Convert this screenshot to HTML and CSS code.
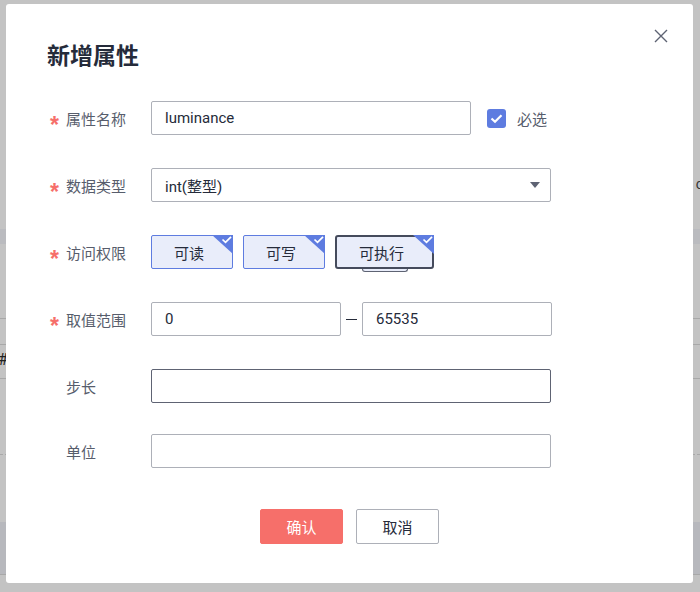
FILE: index.html
```html
<!DOCTYPE html>
<html lang="zh-CN">

<head>
    <meta charset="UTF-8">
    <meta name="viewport" content="width=device-width, initial-scale=1.0">
    <title>新增属性</title>
    <link rel="stylesheet" href="styles.css">
</head>

<body>
    <!-- page behind the mask -->
    <div class="backdrop">
        <div class="bg-row bg-top"><span class="bg-char">c</span></div>
        <div class="bg-row bg-band"></div>
        <div class="bg-row bg-mid"></div>
        <div class="bg-row bg-line"></div>
        <div class="bg-row bg-hash"><span class="bg-mark">#</span></div>
        <div class="bg-row bg-dash"></div>
        <div class="bg-row bg-low"></div>
        <div class="bg-row bg-foot"></div>
    </div>

    <div class="dialog">
        <button class="close" aria-label="关闭">
            <svg width="14" height="14" viewBox="0 0 14 14">
                <path d="M1 1 L13 13 M13 1 L1 13" stroke="#5e6373" stroke-width="1.4" fill="none"/>
            </svg>
        </button>

        <h2 class="title">新增属性</h2>

        <form class="form">
            <div class="row">
                <label class="label"><span class="req">*</span>属性名称</label>
                <div class="control">
                    <input class="input input-name" type="text" value="luminance">
                    <span class="checkbox">
                        <svg width="13" height="11" viewBox="0 0 13 11">
                            <path d="M1.5 5.5 L5 8.8 L11.5 2.2" stroke="#fff" stroke-width="2.2" fill="none"/>
                        </svg>
                    </span>
                    <span class="check-text">必选</span>
                </div>
            </div>

            <div class="row">
                <label class="label"><span class="req">*</span>数据类型</label>
                <div class="control">
                    <div class="select">
                        <span>int(整型)</span>
                        <span class="caret"></span>
                    </div>
                </div>
            </div>

            <div class="row">
                <label class="label"><span class="req">*</span>访问权限</label>
                <div class="control tags">
                    <button type="button" class="tag">可读<span class="corner"></span></button>
                    <button type="button" class="tag">可写<span class="corner"></span></button>
                    <button type="button" class="tag tag-focus">可执行<span class="corner"></span><span class="tag-tab"></span></button>
                </div>
            </div>

            <div class="row">
                <label class="label"><span class="req">*</span>取值范围</label>
                <div class="control">
                    <input class="input input-range" type="text" value="0">
                    <span class="dash"></span>
                    <input class="input input-range" type="text" value="65535">
                </div>
            </div>

            <div class="row row-tight">
                <label class="label">步长</label>
                <div class="control">
                    <input class="input input-wide input-hover" type="text">
                </div>
            </div>

            <div class="row">
                <label class="label">单位</label>
                <div class="control">
                    <input class="input input-wide" type="text">
                </div>
            </div>
        </form>

        <div class="footer">
            <button type="button" class="btn btn-primary">确认</button>
            <button type="button" class="btn">取消</button>
        </div>
    </div>

    <script>
        // tick corner for every selected permission tag
        var tick = '<svg width="21" height="19" viewBox="0 0 21 19">' +
            '<polygon points="0,0 21,0 21,19" fill="#5e7ce0"/>' +
            '<path d="M10.5 4.5 L13.5 7.3 L19 1.8" stroke="#fff" stroke-width="1.7" fill="none"/></svg>';
        document.querySelectorAll(".corner").forEach(function (el) {
            el.innerHTML = tick;
        });
    </script>
</body>

</html>
```

FILE: styles.css
```css
body {
    margin: 0;
    padding: 0;
    width: 700px;
    height: 592px;
    overflow: hidden;
    position: relative;
    background-color: #c3c3c3;
    font-family: Roboto, "Noto Sans CJK SC", sans-serif;
}

/* page under the mask */
.backdrop {
    display: flex;
    flex-direction: column;
}

.bg-row {
    position: relative;
    box-sizing: border-box;
}

.bg-top {
    height: 229px;
}

.bg-char {
    position: absolute;
    right: -3px;
    top: 176px;
    font-size: 14px;
    color: #333;
}

.bg-band {
    height: 15px;
    background-color: #babbbf;
}

.bg-mid {
    height: 75px;
    border-bottom: 1px solid #a8a8a8;
}

.bg-line {
    height: 26px;
    border-bottom: 1px solid #a8a8a8;
}

.bg-hash {
    height: 34px;
    border-bottom: 1px solid #a8a8a8;
}

.bg-mark {
    position: absolute;
    left: -4px;
    top: 8px;
    font-size: 16px;
    color: #222;
    border-left: 2px solid #3d7fc4;
    line-height: 14px;
}

.bg-dash {
    height: 76px;
    border-bottom: 1px dashed #a8a8a8;
}

.bg-low {
    height: 67px;
}

.bg-foot {
    height: 53px;
    background-color: #b7b8bd;
    border-bottom: 1px solid #a8a8a8;
}

/* dialog */
.dialog {
    position: absolute;
    left: 6px;
    top: 4px;
    width: 687px;
    height: 579px;
    box-sizing: border-box;
    padding: 37px 0 0 41px;
    background-color: #fff;
    border-radius: 3px;
}

.close {
    position: absolute;
    right: 25px;
    top: 25px;
    width: 14px;
    height: 14px;
    padding: 0;
    border: none;
    background: none;
    cursor: pointer;
    line-height: 0;
}

.title {
    margin: 0 0 33px 0;
    font-size: 23px;
    line-height: 27px;
    font-weight: bold;
    color: #252b3a;
    font-family: "Noto Sans CJK SC", sans-serif;
}

.row {
    display: flex;
    align-items: center;
    height: 34px;
    margin-bottom: 33px;
}

.row-tight {
    margin-bottom: 31px;
}

.label {
    width: 104px;
    flex-shrink: 0;
    font-size: 15px;
    color: #575d6c;
    font-family: "Noto Sans CJK SC", sans-serif;
    padding-left: 19px;
    box-sizing: border-box;
    position: relative;
}

.req {
    position: absolute;
    left: 3px;
    top: 6px;
    color: #f66f6a;
    font-size: 23px;
    line-height: 23px;
    font-weight: bold;
    font-family: "Liberation Sans", sans-serif;
}

.control {
    display: flex;
    align-items: center;
}

.input {
    height: 34px;
    box-sizing: border-box;
    border: 1px solid #adb0b8;
    border-radius: 2px;
    padding: 0 13px;
    font-size: 15px;
    font-family: Roboto, "Noto Sans CJK SC", sans-serif;
    color: #252b3a;
    outline: none;
    background-color: #fff;
}

.input-name {
    width: 320px;
}

.input-range {
    width: 190px;
}

.input-wide {
    width: 400px;
}

.input-hover {
    border-color: #5e6373;
}

.checkbox {
    margin-left: 16px;
    width: 19px;
    height: 19px;
    border-radius: 3px;
    background-color: #5e7ce0;
    display: flex;
    align-items: center;
    justify-content: center;
}

.check-text {
    margin-left: 11px;
    font-size: 15px;
    color: #575d6c;
}

.select {
    width: 400px;
    height: 34px;
    box-sizing: border-box;
    border: 1px solid #adb0b8;
    border-radius: 2px;
    padding: 0 10px 0 13px;
    display: flex;
    align-items: center;
    justify-content: space-between;
    font-size: 15px;
    color: #252b3a;
}

.caret {
    width: 0;
    height: 0;
    border-left: 5px solid transparent;
    border-right: 5px solid transparent;
    border-top: 6px solid #5e6373;
}

.tags {
    gap: 10px;
}

.tag {
    position: relative;
    height: 34px;
    width: 82px;
    box-sizing: border-box;
    border: 1px solid #5e7ce0;
    border-radius: 2px;
    background-color: #e9edfa;
    font-size: 15px;
    font-family: "Noto Sans CJK SC", sans-serif;
    color: #252b3a;
    padding: 0 6px 0 0;
    cursor: pointer;
}

.tag-focus {
    width: 99px;
    border: 2px solid #454b5c;
    border-radius: 3px;
}

.corner {
    position: absolute;
    right: -1px;
    top: -1px;
    line-height: 0;
}

.tag-focus .corner {
    right: -2px;
    top: -2px;
}

.tag-tab {
    position: absolute;
    left: 25px;
    bottom: -5px;
    width: 46px;
    height: 3px;
    box-sizing: border-box;
    border: 1px solid #5e6373;
    border-top: none;
    border-radius: 0 0 3px 3px;
    background-color: #e9edfa;
}

.dash {
    width: 11px;
    height: 1px;
    margin: 0 5px;
    background-color: #252b3a;
}

.footer {
    display: flex;
    justify-content: center;
    gap: 13px;
    margin: 41px 41px 0 0;
}

.btn {
    width: 83px;
    height: 35px;
    box-sizing: border-box;
    border: 1px solid #adb0b8;
    border-radius: 2px;
    background-color: #fff;
    font-size: 15px;
    font-family: "Noto Sans CJK SC", sans-serif;
    color: #252b3a;
    cursor: pointer;
}

.btn-primary {
    border-color: #f66f6a;
    background-color: #f66f6a;
    color: #fff;
}
```
